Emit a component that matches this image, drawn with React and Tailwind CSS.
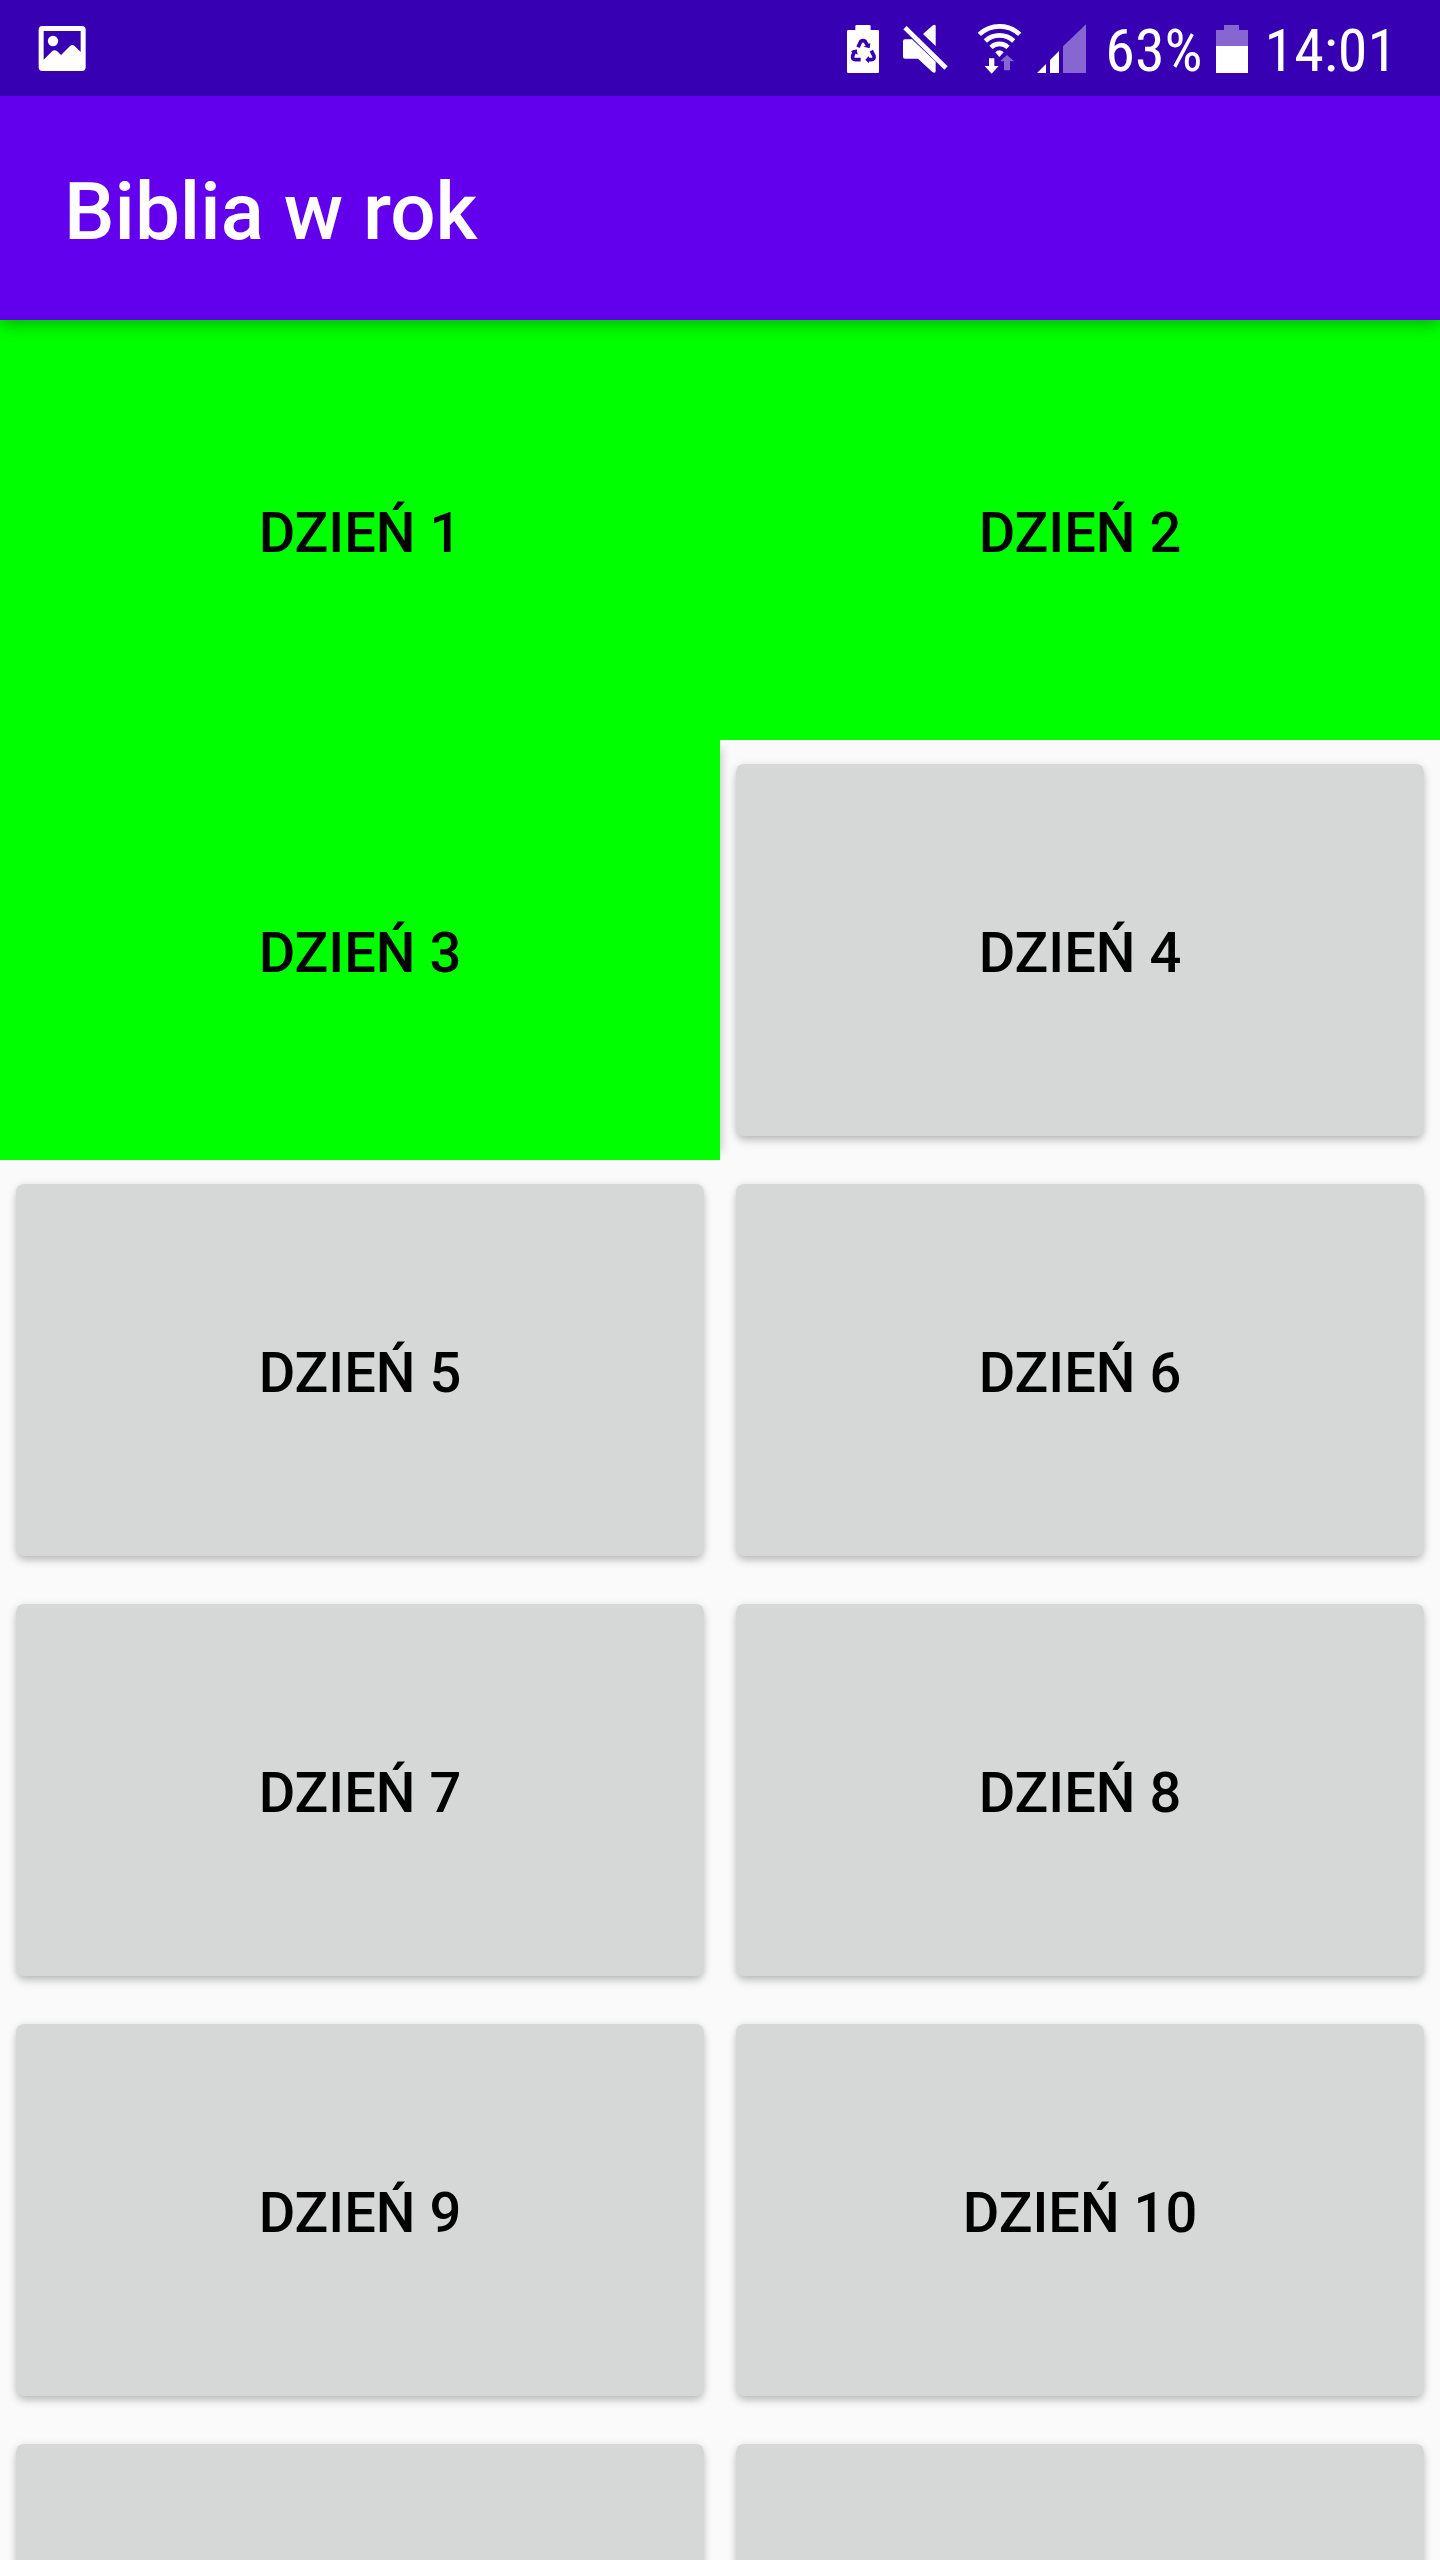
const DAYS = Array.from({ length: 12 }, (_, i) => i + 1);
const READ = new Set([1, 2, 3]);

function PictureIcon() {
  return (
    <svg className="h-[52px] w-12" viewBox="114 66 144 156" aria-hidden="true">
      <path
        fill="#fff"
        fillRule="evenodd"
        d="M127 78H246Q257 78 257 89V202Q257 213 246 213H127Q116 213 116 202V89Q116 78 127 78ZM131 93V179L157 153Q164 148 171 153L183 165L210 138Q217 132 224 138L242 156V93Z"
      />
      <circle cx="159" cy="123" r="15.500" fill="#fff" />
    </svg>
  );
}

function BatterySaverIcon() {
  return (
    <svg className="h-[52px] w-[34px]" viewBox="48 36 102 156" aria-hidden="true">
      <path fill="#fff" d="M76 60V49Q76 45 80 45H118Q122 45 122 49V60H143Q147 60 147 64V185Q147 189 143 189H55Q51 189 51 185V64Q51 60 55 60Z" />
      <g fill="none" stroke="#3700b3" strokeWidth="11">
        <path d="M84 112L91 97Q93 92 99 92Q105 92 107 97L113 107" />
        <path d="M74 122L68 138Q66 149 76 149H92" />
        <path d="M124 122L132 138Q134 149 124 149H112" />
      </g>
      <g fill="#3700b3">
        <path d="M101 110L119 115L121 99Z" />
        <path d="M62 124L80 118L83 134Z" />
        <path d="M106 149L117 138V160Z" />
      </g>
    </svg>
  );
}

function MuteIcon() {
  return (
    <svg className="h-[52px] w-[47px]" viewBox="216 36 141 156" aria-hidden="true">
      <g fill="#fff">
        <path d="M279 72L307 47Q317 41 317 49V108Z" />
        <path d="M225 88H246L317 155V183Q317 192 307 186L264 146H225Q219 146 219 140V94Q219 88 225 88Z" />
        <path d="M230 48L353 169L343 179L220 58Z" />
      </g>
    </svg>
  );
}

function WifiIcon() {
  return (
    <svg className="h-[52px] w-[45px]" viewBox="51 36 135 156" aria-hidden="true">
      <g fill="none" stroke="#fff" strokeWidth="14">
        <path d="M58 73A88 88 0 0 1 179 73" />
        <path d="M76 93A62 62 0 0 1 161 93" />
        <path d="M93 112A37 37 0 0 1 144 112" />
      </g>
      <path fill="#fff" d="M106 127Q118 114 131 127L118 141Z" />
      <path fill="#fff" d="M87 145H103V168H116L95 191L74 168H87Z" />
      <path fill="#8766d1" d="M141 135L162 154H150V181H132V154H120Z" />
    </svg>
  );
}

function SignalIcon() {
  return (
    <svg className="h-[52px] w-[51px]" viewBox="228 36 153 156" aria-hidden="true">
      <path fill="#fff" d="M231 189L258 162V189ZM270 189V150L297 123V189Z" />
      <path fill="#8766d1" d="M309 189V109L378 43V189Z" />
    </svg>
  );
}

function BatteryIcon() {
  return (
    <svg className="h-[52px] w-[34px]" viewBox="405 36 102 156" aria-hidden="true">
      <path fill="#8766d1" d="M408 108V60H432V45H477V60H504V108Z" />
      <path fill="#fff" d="M408 108H504V189H408Z" />
    </svg>
  );
}

function StatusBar() {
  return (
    <div className="z-20 flex h-24 shrink-0 items-center bg-[#3700b3] pr-[43px] pl-[38px] font-['Roboto_Condensed','Roboto',sans-serif] text-[60px] leading-none text-white">
      <PictureIcon />
      <div className="ml-auto flex items-center">
        <BatterySaverIcon />
        <div className="ml-[22px]"><MuteIcon /></div>
        <div className="ml-7"><WifiIcon /></div>
        <div className="ml-3.5"><SignalIcon /></div>
        <span className="ml-[18px] pt-1.5">63%</span>
        <div className="mr-4 ml-3"><BatteryIcon /></div>
        <time className="pt-1.5">14:01</time>
      </div>
    </div>
  );
}

function DayButton({ day }) {
  const read = READ.has(day);
  return (
    <div className={read ? "h-[420px] bg-[#00ff00] shadow-[10px_0_8px_-8px_rgba(0,0,0,0.2)]" : "h-[420px] px-4 py-6"}>
      <button
        type="button"
        className={
          read
            ? "size-full pt-1.5 text-[56px] font-medium text-black uppercase"
            : "size-full rounded-lg bg-[#d6d8d7] pt-1.5 text-[56px] font-medium text-black uppercase shadow-[0_5px_8px_-1px_rgba(0,0,0,0.24),0_0_8px_rgba(0,0,0,0.07)]"
        }
      >
        Dzień {day}
      </button>
    </div>
  );
}

export default function App() {
  return (
    <div className="flex h-screen flex-col overflow-hidden bg-[#fafafa] font-['Roboto',sans-serif]">
      <StatusBar />
      <header className="z-10 flex h-56 shrink-0 items-center bg-[#6200ee] px-16 shadow-[0_4px_16px_rgba(0,0,0,0.3)]">
        <h1 className="pt-2 text-[80px] leading-none font-medium text-white">Biblia w rok</h1>
      </header>
      <main className="grid min-h-0 flex-1 grid-cols-2 content-start overflow-y-auto [scrollbar-width:none]">
        {DAYS.map((day) => (
          <DayButton key={day} day={day} />
        ))}
      </main>
    </div>
  );
}
